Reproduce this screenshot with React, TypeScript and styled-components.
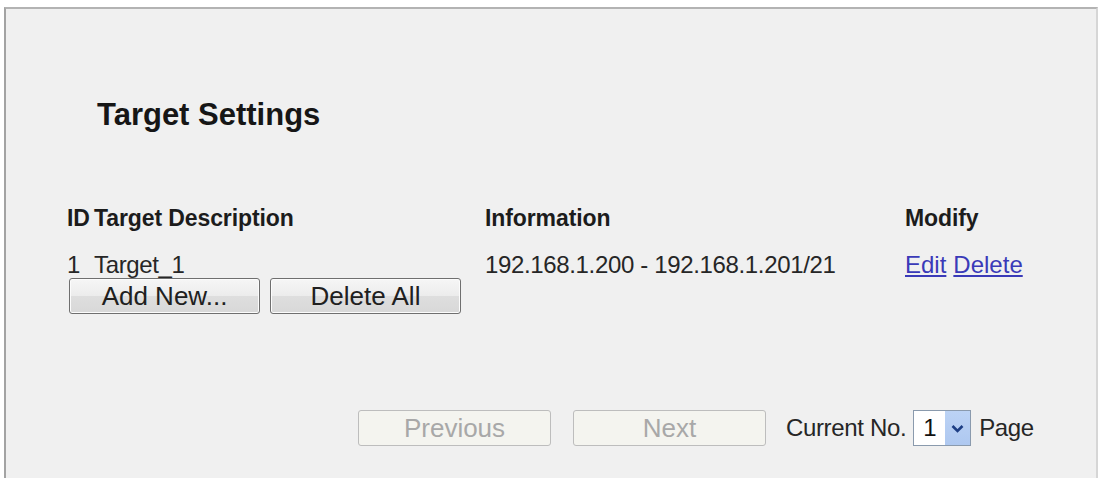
import React from 'react'
import styled, { createGlobalStyle } from 'styled-components'

const GlobalStyle = createGlobalStyle`
  html, body {
    margin: 0;
    padding: 0;
    background: #ffffff;
    overflow: hidden;
  }
  body {
    font-family: 'Liberation Sans', Arial, sans-serif;
    color: #1e1e1e;
  }
`

const Page = styled.div`
  padding: 7px 2px 0 4px;
  height: 478px;
  box-sizing: border-box;
`

const Panel = styled.div`
  background: #f0f0f0;
  border: 2px solid #b3b3b3;
  border-bottom: none;
  border-left-color: #a3a3a3;
  border-right-color: #d6d6d6;
  height: 480px;
  box-sizing: border-box;
  padding-left: 61px;
`

const Title = styled.h1`
  margin: 88px 0 0 30px;
  font-size: 31px;
  line-height: 36px;
  font-weight: bold;
  color: #161616;
`

const Table = styled.div`
  display: grid;
  grid-template-columns: 27px 391px 420px auto;
  margin-top: 62px;
  font-size: 24px;
`

const HeadCell = styled.div`
  line-height: 46px;
  font-size: 23px;
  font-weight: bold;
  letter-spacing: -0.1px;
  color: #1c1c1c;
  white-space: nowrap;
`

const Cell = styled.div`
  line-height: 48px;
  letter-spacing: -0.35px;
  color: #262626;
  white-space: nowrap;
`

const Link = styled.a`
  color: #3a3ab8;
  letter-spacing: 0;
  text-decoration: underline;
  cursor: pointer;
  & + & {
    margin-left: 7px;
  }
`

const Actions = styled.div`
  display: flex;
  gap: 10px;
  margin-top: -11px;
  margin-left: 2px;
`

const Button = styled.button<{ disabled?: boolean }>`
  width: ${({ disabled }) => (disabled ? '193px' : '191px')};
  height: 36px;
  padding: 0;
  border-radius: 3px;
  font-family: 'Liberation Sans', Arial, sans-serif;
  font-size: 26px;
  line-height: 34px;
  border: 1px solid ${({ disabled }) => (disabled ? '#bdbdbd' : '#6f6f6f')};
  background: ${({ disabled }) =>
    disabled
      ? '#f4f4ef'
      : 'linear-gradient(#f6f6f6 0%, #ececec 50%, #dedede 51%, #d8d8d8 100%)'};
  color: ${({ disabled }) => (disabled ? '#a8a8a8' : '#202020')};
  box-shadow: ${({ disabled }) =>
    disabled ? 'none' : 'inset 0 0 0 1px #fcfcfc'};
`

const Pager = styled.div`
  display: flex;
  align-items: center;
  margin-top: 96px;
  margin-left: 291px;
  font-size: 24px;
  letter-spacing: -0.35px;
  color: #262626;
`

const PagerButtons = styled.div`
  display: flex;
  gap: 22px;
  margin-right: 20px;
  letter-spacing: 0;
`

const Select = styled.div`
  display: flex;
  width: 56px;
  height: 34px;
  margin: 0 8px 0 7px;
  border: 1px solid #8a9aad;
  background: #ffffff;
`

const SelectValue = styled.span`
  flex: 1;
  line-height: 34px;
  padding-left: 9px;
  color: #111111;
`

const SelectArrow = styled.span`
  width: 25px;
  display: flex;
  align-items: center;
  justify-content: center;
  background: linear-gradient(#bcd3f5, #aec8f0);
`

const Chevron = () => (
  <svg width="13" height="9" viewBox="0 0 13 9">
    <path d="M1.5 2 L6.5 7 L11.5 2" fill="none" stroke="#1d3e84" strokeWidth="2.6" />
  </svg>
)

export default function App() {
  return (
    <>
      <GlobalStyle />
      <Page>
        <Panel>
          <Title>Target Settings</Title>
          <Table>
            <HeadCell>ID</HeadCell>
            <HeadCell>Target Description</HeadCell>
            <HeadCell>Information</HeadCell>
            <HeadCell>Modify</HeadCell>
            <Cell>1</Cell>
            <Cell>Target_1</Cell>
            <Cell>192.168.1.200 - 192.168.1.201/21</Cell>
            <Cell>
              <Link>Edit</Link>
              <Link>Delete</Link>
            </Cell>
          </Table>
          <Actions>
            <Button>Add New...</Button>
            <Button>Delete All</Button>
          </Actions>
          <Pager>
            <PagerButtons>
              <Button disabled>Previous</Button>
              <Button disabled>Next</Button>
            </PagerButtons>
            <span>Current No.</span>
            <Select>
              <SelectValue>1</SelectValue>
              <SelectArrow>
                <Chevron />
              </SelectArrow>
            </Select>
            <span>Page</span>
          </Pager>
        </Panel>
      </Page>
    </>
  )
}
